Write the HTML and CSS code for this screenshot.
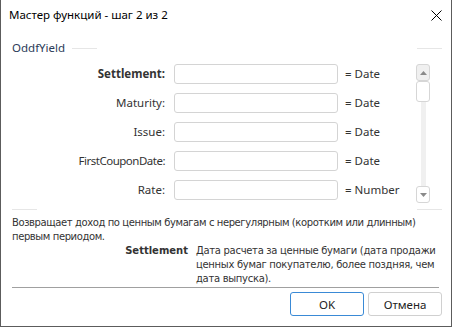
FILE: index.html
```html
<!DOCTYPE html>
<html>
<head>
<meta charset="utf-8">
<link rel="stylesheet" href="styles.css">
</head>
<body>
<div class="window">
  <div class="titlebar">
    <span class="title">Мастер функций - шаг 2 из 2</span>
    <svg class="close" width="11" height="11" viewBox="0 0 11 11"><path d="M0.5 0.5 L10.5 10.5 M10.5 0.5 L0.5 10.5" stroke="#000" stroke-width="1" fill="none"/></svg>
  </div>
  <div class="group-head">
    <span class="group-label">OddfYield</span>
    <span class="gline gline-left"></span>
    <span class="spacer"></span>
    <span class="gline"></span>
  </div>
  <div class="fields">
    <label class="lbl bold">Settlement:</label><div class="input"></div><span class="type">= Date</span>
    <div class="scrollbar">
      <div class="sb-btn"><svg width="7" height="4" viewBox="0 0 7 4"><path d="M3.5 0 L7 4 L0 4 Z" fill="#8a8a8a"/></svg></div>
      <div class="sb-thumb"></div>
      <div class="sb-track"></div>
      <div class="sb-btn"><svg width="7" height="4" viewBox="0 0 7 4"><path d="M0 0 L7 0 L3.5 4 Z" fill="#8a8a8a"/></svg></div>
    </div>
    <label class="lbl">Maturity:</label><div class="input"></div><span class="type">= Date</span>
    <label class="lbl">Issue:</label><div class="input"></div><span class="type">= Date</span>
    <label class="lbl narrow">FirstCouponDate:</label><div class="input"></div><span class="type">= Date</span>
    <label class="lbl">Rate:</label><div class="input"></div><span class="type">= Number</span>
  </div>
  <div class="group-foot">
    <span class="gline"></span>
    <span class="spacer"></span>
    <span class="gline"></span>
  </div>
  <div class="desc">Возвращает доход по ценным бумагам с нерегулярным (коротким или длинным)<br>первым периодом.</div>
  <div class="param">
    <span class="param-name">Settlement</span>
    <span class="param-desc">Дата расчета за ценные бумаги (дата продажи<br>ценных бумаг покупателю, более поздняя, чем<br>дата выпуска).</span>
  </div>
  <div class="sep"></div>
  <div class="buttons">
    <button class="btn primary">OK</button>
    <button class="btn">Отмена</button>
  </div>
</div>
</body>
</html>
```
FILE: styles.css
```css
html, body {
  margin: 0;
  padding: 0;
  background: #fff;
}
.window {
  width: 452px;
  height: 327px;
  box-sizing: border-box;
  border: 1px solid #5c5c5c;
  border-top: none;
  background: #fff;
  display: flex;
  flex-direction: column;
  font-family: "Noto Sans", sans-serif;
  font-size: 11.5px;
  color: #333;
}
.titlebar {
  height: 29px;
  display: flex;
  align-items: center;
  justify-content: space-between;
  padding: 0 9px 0 8px;
}
.title {
  color: #000;
  font-size: 11.5px;
}
.close {
  display: block;
  margin-top: 1px;
}
.group-head {
  margin: 12px 9px 0 11px;
  height: 14px;
  display: flex;
  align-items: center;
}
.group-label {
  color: #2a3b58;
  line-height: 14px;
}
.gline {
  width: 25px;
  height: 1px;
  background: #e6e6e6;
}
.gline-left {
  margin-left: 7px;
}
.spacer {
  flex: 1;
}
.fields {
  margin: 9px 0 0 11px;
  display: grid;
  grid-template-columns: 162px 164px 78px 14px;
  grid-auto-rows: 20px;
  column-gap: 0;
  row-gap: 9px;
}
.lbl {
  text-align: right;
  padding-right: 9px;
  line-height: 20px;
  white-space: nowrap;
}
.lbl.narrow {
  letter-spacing: -0.5px;
}
.bold {
  font-weight: bold;
}
.input {
  box-sizing: border-box;
  border: 1px solid #d4d4d4;
  border-radius: 3px;
  background: #fff;
}
.type {
  padding-left: 7px;
  line-height: 20px;
  white-space: nowrap;
}
.scrollbar {
  grid-column: 4;
  grid-row: 1 / 6;
  height: 139px;
  display: flex;
  flex-direction: column;
  align-items: center;
}
.sb-btn {
  box-sizing: border-box;
  width: 14px;
  height: 17px;
  border: 1px solid #d6d6d6;
  border-radius: 3px;
  background: #f0f0f0;
  display: flex;
  align-items: center;
  justify-content: center;
}
.sb-btn:last-child {
  background: #fff;
}
.sb-thumb {
  box-sizing: border-box;
  width: 14px;
  height: 21px;
  border: 1px solid #d6d6d6;
  border-radius: 3px;
  background: #fff;
}
.sb-track {
  flex: 1;
  width: 5px;
  background: #f0f0f0;
}
.group-foot {
  margin: 9px 9px 0 11px;
  height: 1px;
  display: flex;
}
.desc {
  margin: 6px 0 0 11px;
  font-family: "DejaVu Sans", sans-serif;
  font-size: 10px;
  letter-spacing: -0.4px;
  line-height: 14px;
  color: #333;
  white-space: nowrap;
}
.param {
  display: flex;
  margin-left: 11px;
  font-family: "DejaVu Sans", sans-serif;
  font-size: 10px;
  letter-spacing: -0.3px;
  line-height: 14px;
  color: #333;
  white-space: nowrap;
}
.param-name {
  width: 184px;
  text-align: right;
  font-weight: bold;
  font-size: 10px;
  letter-spacing: 0;
  padding-right: 8px;
  box-sizing: border-box;
  flex: none;
}
.sep {
  margin: 1px 12px 0 11px;
  height: 1px;
  background: #a0a0a0;
}
.buttons {
  display: flex;
  justify-content: flex-end;
  gap: 4px;
  margin: 4px 9px 0 0;
}
.btn {
  width: 74px;
  height: 24px;
  box-sizing: border-box;
  border: 1px solid #d0d0d0;
  border-radius: 3px;
  background: #fff;
  font-family: "Noto Sans", sans-serif;
  font-size: 11.5px;
  color: #222;
  padding: 0;
}
.btn.primary {
  border-color: #3a8ad6;
}
```
